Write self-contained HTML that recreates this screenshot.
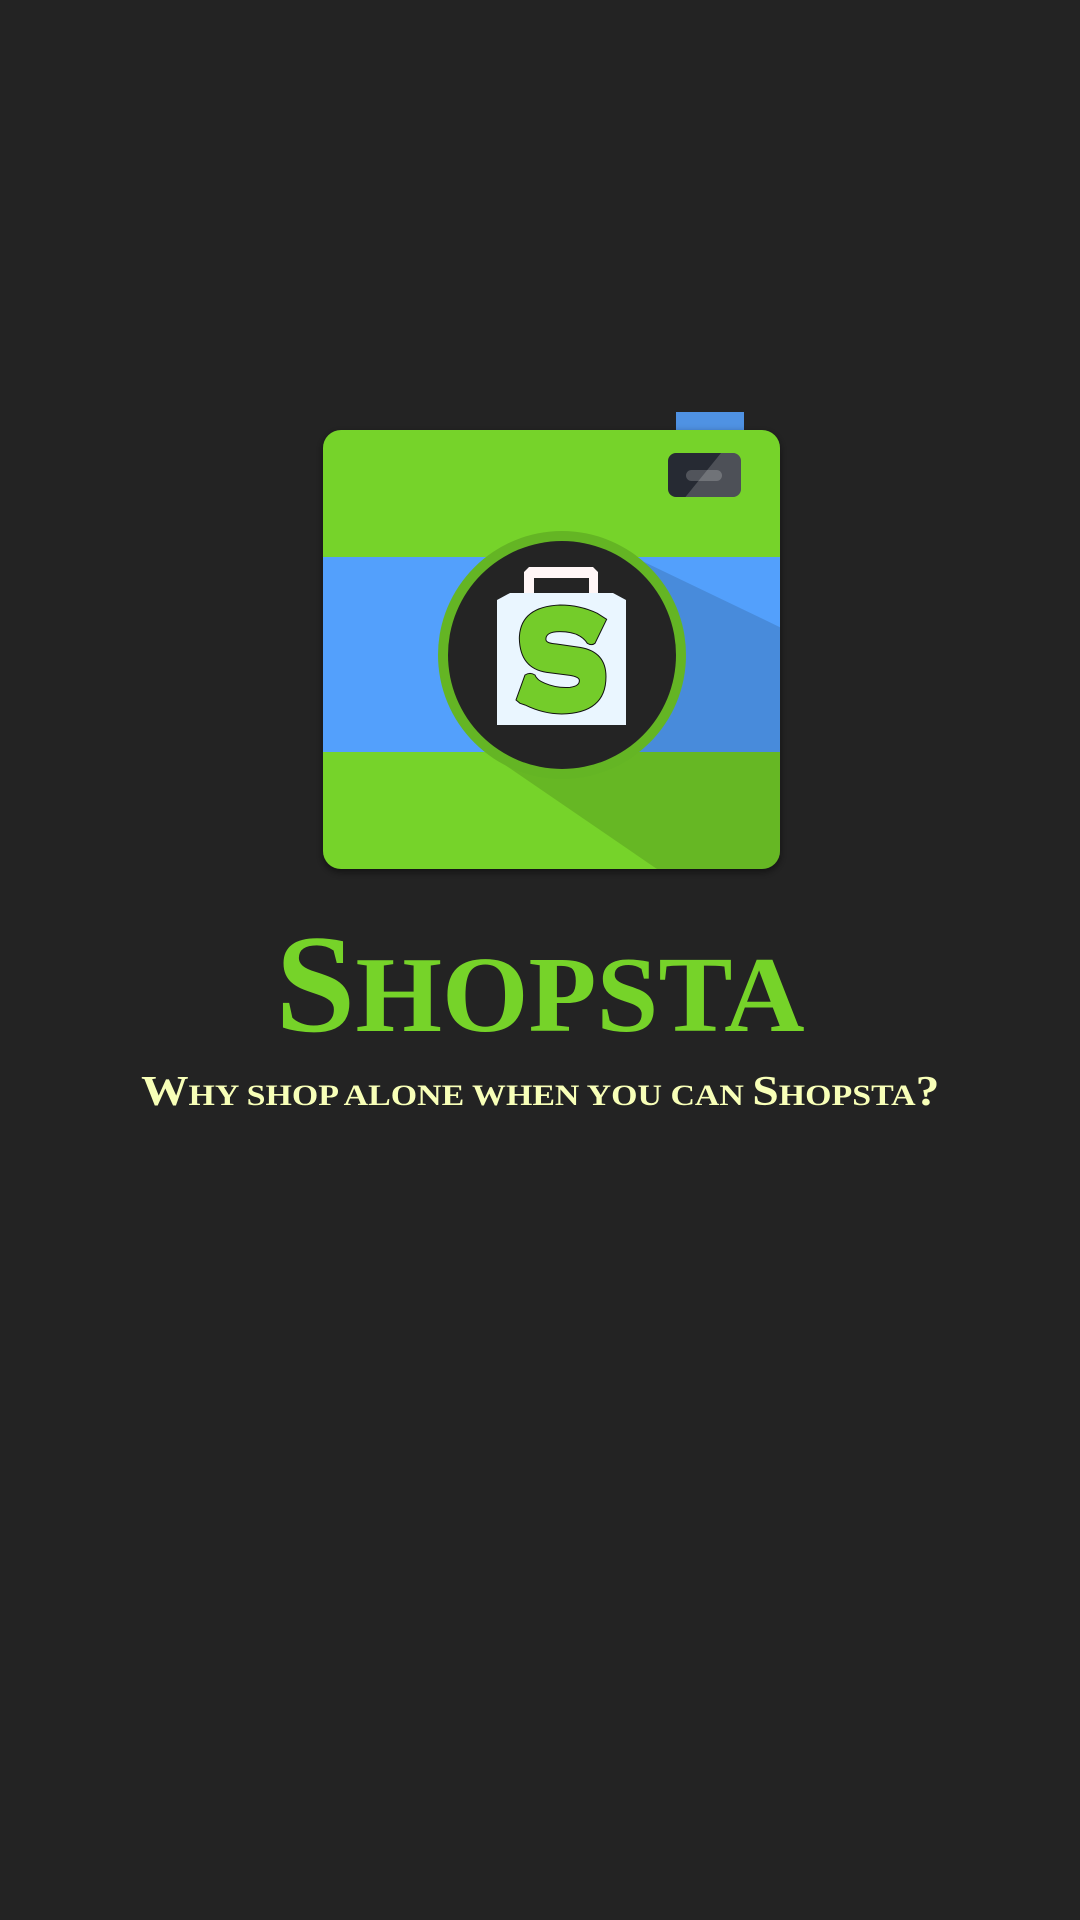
<!DOCTYPE html>
<html><head><meta charset="utf-8"><style>
html,body{margin:0;padding:0;background:#232323;width:1080px;height:1920px;overflow:hidden}
.t{position:absolute;left:0;width:1080px;text-align:center;font-family:"Liberation Serif",serif;font-weight:bold;white-space:nowrap}
.t span.w{display:inline-block;transform-origin:center}
</style></head><body>
<svg width="1080" height="1920" style="position:absolute;left:0;top:0">
<defs>
<clipPath id="body"><rect x="323" y="430" width="457" height="439" rx="18"/></clipPath>
<filter id="sh" x="-10%" y="-10%" width="120%" height="120%"><feDropShadow dx="0" dy="3" stdDeviation="4" flood-color="#000" flood-opacity="0.5"/></filter>
</defs>
<rect x="676" y="412" width="68" height="20" fill="#4f92e3"/>
<rect x="323" y="430" width="457" height="439" rx="18" fill="#76d329" filter="url(#sh)"/>
<g clip-path="url(#body)">
<rect x="323" y="557" width="460" height="195" fill="#53a0fc"/>
<polygon points="640,560 790,632 790,880 673,880 505,765 600,700" fill="#000" opacity="0.13"/>
</g>
<circle cx="562" cy="655" r="124" fill="#64b524"/>
<circle cx="562" cy="655" r="114" fill="#242424"/>
<path d="M524 593 V572 L529 567 H593 L598 572 V593 H589 V578 H534 V593 Z" fill="#fff6f6"/>
<path d="M497 600 L510 593 H613 L626 600 V725 H497 Z" fill="#eaf6ff"/>
<g transform="translate(480,560) scale(0.3333)">
<path d="M380 178 L345 250 Q 335 258 322 250 Q 300 215 240 215 Q 195 215 198 240 Q 200 250 230 252 L300 262 Q 378 275 378 350 Q 378 460 245 462 Q 190 462 135 435 L120 430 L108 420 L135 345 Q 150 335 165 345 Q 170 360 195 370 Q 230 385 270 382 Q 300 378 298 360 Q 296 350 270 346 L200 337 Q 120 325 118 235 Q 120 140 240 135 Q 300 135 352 160 Z" fill="#74cc2a" stroke="#111" stroke-width="3"/>
</g>
<rect x="668" y="453" width="73" height="44" rx="8" fill="#262a33"/>
<clipPath id="vf"><rect x="668" y="453" width="73" height="44" rx="8"/></clipPath>
<polygon points="721,453 745,453 745,500 683,500" fill="#fff" opacity="0.18" clip-path="url(#vf)"/>
<rect x="686" y="470" width="36" height="11" rx="5.5" fill="#fff" opacity="0.2"/>
</svg>
<div class="t" style="top:915px;color:#76d329;font-size:140px;line-height:140px"><span class="w" style="transform:scaleX(1.03)">S<span style="font-size:108px">HOPSTA</span></span></div>
<div class="t" style="top:1067px;color:#f8ffb8;font-size:42px;line-height:50px"><span class="w" style="transform:scaleX(1.13)">W<span style="font-size:30px">HY SHOP ALONE WHEN YOU CAN </span>S<span style="font-size:30px">HOPSTA</span>?</span></div>
</body></html>
